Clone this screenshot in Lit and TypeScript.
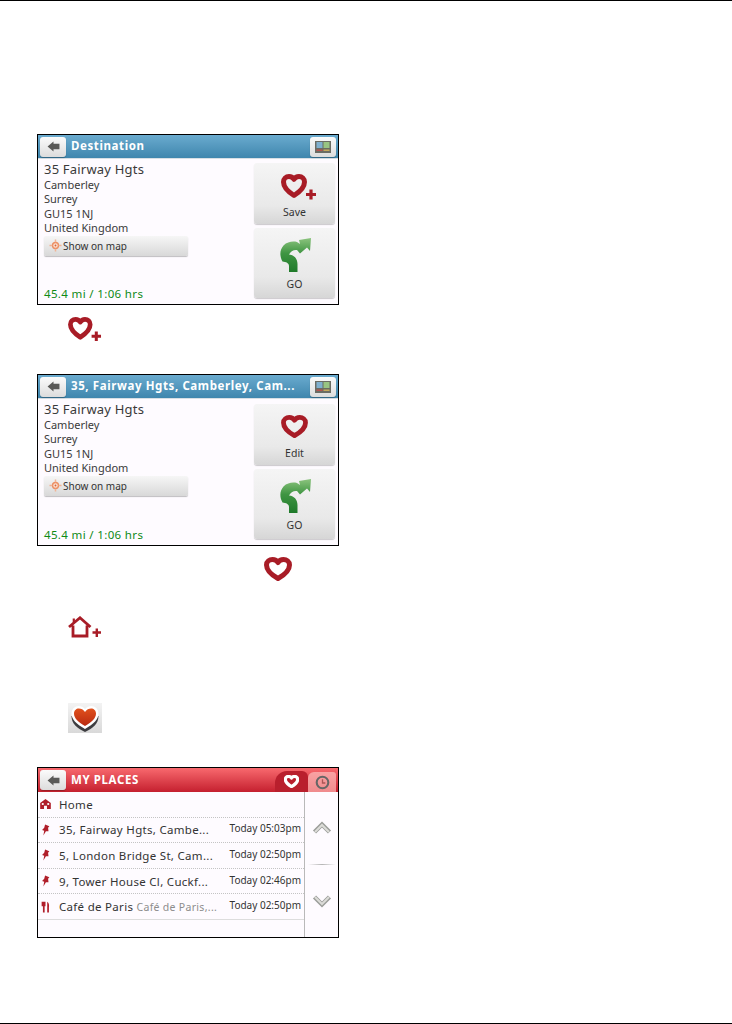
import { LitElement, html, css } from "lit";
import { customElement } from "lit/decorators.js";

const heartPath = "M14 21.5 C6 17 2.5 12.5 2.5 8 C2.5 4.5 5.5 2.5 8.5 2.5 C10.5 2.5 12.8 3.5 14 5.5 C15.2 3.5 17.5 2.5 19.5 2.5 C22.5 2.5 25.5 4.5 25.5 8 C25.5 12.5 22 17 14 21.5 Z";

const heart = (cls: string, sw = 5) => html`<svg class=${cls} viewBox="0 0 28 24"><path d=${heartPath} fill="none" stroke="#a81c26" stroke-width=${sw} stroke-linejoin="round"/></svg>`;

const heartPlus = (cls: string) => html`<svg class=${cls} viewBox="0 0 36 26">
  <path d="M13 21.5 C6 17 2.5 12.5 2.5 8 C2.5 4.7 5 2.5 8 2.5 C10 2.5 12 3.6 13 5.4 C14 3.6 16 2.5 18 2.5 C21 2.5 23.5 4.7 23.5 8 C23.5 12.5 20 17 13 21.5 Z" fill="none" stroke="#a81c26" stroke-width="5" stroke-linejoin="round"/>
  <path d="M25 20.5 H35 M30 15.5 V25.5" stroke="#a81c26" stroke-width="3.2" fill="none"/>
</svg>`;

const backArrow = html`<svg class="back-ico" viewBox="0 0 14 12"><path d="M0.5 6 L7 0.5 V3 H13.5 V9 H7 V11.5 Z" fill="#5a5a58"/></svg>`;

const mapIco = html`<svg class="map-ico" viewBox="0 0 16 12">
  <rect width="16" height="12" fill="#6a6c64"/>
  <rect x="1.5" y="1" width="6" height="6" fill="#7fb0cf"/>
  <rect x="8.5" y="1" width="6" height="6" fill="#98c483"/>
  <rect x="1.5" y="8.5" width="6" height="1.5" fill="#b9524c"/>
  <rect x="8.5" y="8.5" width="6" height="1.5" fill="#c7a95a"/>
</svg>`;

const target = html`<svg class="target" viewBox="0 0 14 14">
  <circle cx="7" cy="7" r="3.2" fill="#fbe2d4" stroke="#ec8e62" stroke-width="1.5"/>
  <circle cx="7" cy="7" r="1" fill="#d8643a"/>
  <path d="M7 0.5 V3.5 M7 10.5 V13.5 M0.5 7 H3.5 M10.5 7 H13.5" stroke="#f2b394" stroke-width="1.6"/>
</svg>`;

const goArrow = (id: string) => html`<svg class="go-ico" viewBox="0 0 32 35">
  <defs><linearGradient id=${id} x1="0" y1="0" x2="0" y2="1">
    <stop offset="0" stop-color="#8cc47e"/><stop offset="0.45" stop-color="#3f9542"/><stop offset="1" stop-color="#1f7a2a"/>
  </linearGradient></defs>
  <path d="M9 34 V28 C9 25 6 24 2.5 23.5 C-0.5 18 -0.5 12 3.5 7.5 C7.5 3.5 13 3 17 4 L20 6 L19 2 L31 0 L30 13 L27 9.5 L20 15.5 L17 12 C13.5 11.5 10.5 13.5 9 16.5 C14.5 17 17.5 21 17.5 26 V34 Z" fill="url(#${id})"/>
</svg>`;

const pin = html`<svg class="row-ico" viewBox="0 0 10 14"><path d="M4.5 0.5 L9.5 2.5 L8 4.5 L8.5 8.5 L5.5 8.5 L2.5 13.5 L3.5 8 L1 7 L3.5 4.5 Z" fill="#b01e2a"/></svg>`;
const house = html`<svg class="row-ico" viewBox="0 0 12 12"><path d="M6 0.5 L11.8 5 V11.5 H7.6 V8 H4.4 V11.5 H0.2 V5 Z" fill="#b01e2a"/><rect x="2" y="5" width="2" height="2" fill="#fff"/><rect x="8" y="5" width="2" height="2" fill="#fff"/></svg>`;
const fork = html`<svg class="row-ico" viewBox="0 0 10 14"><path d="M0.5 1 V6 H2 V13.5 H4 V6 H5 V1 Z M7 1 C9 2 9.5 5 9 7.5 V13.5 H7 Z" fill="#b01e2a"/></svg>`;

const chevUp = html`<svg class="chev" viewBox="0 0 20 14"><path d="M2.5 11 L10 3.5 L17.5 11" fill="none" stroke="#9c9e9a" stroke-width="4.4"/><path d="M3 11 L10 4 L17 11" fill="none" stroke="#dcdcd8" stroke-width="2"/></svg>`;
const chevDown = html`<svg class="chev" viewBox="0 0 20 14"><path d="M2.5 3 L10 10.5 L17.5 3" fill="none" stroke="#9c9e9a" stroke-width="4.4"/><path d="M3 3 L10 10 L17 3" fill="none" stroke="#dcdcd8" stroke-width="2"/></svg>`;

const homePlus = html`<svg class="ico-home" viewBox="0 0 34 22">
  <path d="M1 11 L12 1.8 L22.5 11 M5 9.5 V20 H19 V9.5" fill="none" stroke="#a81c26" stroke-width="2.8"/>
  <path d="M5.8 2.5 V6.5" stroke="#a81c26" stroke-width="2.2"/>
  <path d="M24.5 16.5 H33 M28.8 12.5 V21" stroke="#a81c26" stroke-width="2.4"/>
</svg>`;

const heartTile = html`<div class="tile"><svg viewBox="0 0 34 30" class="tile-ico">
  <defs><linearGradient id="th" x1="0" y1="0" x2="0" y2="1"><stop offset="0" stop-color="#e0501c"/><stop offset="1" stop-color="#b92a10"/></linearGradient></defs>
  <path d="M17 29 C9 25 3.5 21 3.5 13 H30.5 C30.5 21 25 25 17 29 Z" fill="#3d3d40"/>
  <path d="M17 26 C8 21 3.5 16 3.5 10.5 C3.5 6 7 3 10.5 3 C13 3 15.5 4 17 6 C18.5 4 21 3 23.5 3 C27 3 30.5 6 30.5 10.5 C30.5 16 26 21 17 26 Z" fill="#fff"/>
  <path d="M17 23 C10 19 6 15 6 10.5 C6 7.5 8.3 5.5 10.8 5.5 C13 5.5 15.6 6.6 17 9 C18.4 6.6 21 5.5 23.2 5.5 C25.7 5.5 28 7.5 28 10.5 C28 15 24 19 17 23 Z" fill="url(#th)"/>
</svg></div>`;

const heartWhite = html`<svg class="tab-heart" viewBox="0 0 28 24"><path d=${heartPath} fill="#b91f2d" stroke="#fff" stroke-width="6" stroke-linejoin="round"/></svg>`;
const clock = html`<svg class="clock" viewBox="0 0 16 16"><circle cx="8" cy="8" r="6.2" fill="none" stroke="#666" stroke-width="2.2"/><path d="M8 4.5 V8.5 H11" fill="none" stroke="#a55" stroke-width="1.4"/></svg>`;

@customElement("app-root")
export class AppRoot extends LitElement {
  static styles = css`
    :host { display: block; width: 732px; height: 1024px; background: #fff; font-family: "Noto Sans", sans-serif; color: #333; }
    .page { display: flex; flex-direction: column; height: 1024px; }
    .rule { height: 1px; background: #000; flex: none; }
    .content { flex: 1; padding: 133px 0 0 37px; display: flex; flex-direction: column; align-items: flex-start; }
    .frame { width: 302px; box-sizing: border-box; border: 1px solid #000; background: #fefbff; display: flex; flex-direction: column; overflow: hidden; flex: none; }
    .dest { height: 171px; }
    .dest.tall { height: 172px; }
    .head { height: 24px; flex: none; display: flex; align-items: center; padding: 0 2px; gap: 5px; background: linear-gradient(#6aabcf, #3f86ad); border-bottom: 1px solid #d8dfe4; box-sizing: border-box; }
    .head.red { background: linear-gradient(#f8696e, #c5202f); border-bottom: 0; padding-right: 0; }
    .hbtn { width: 26px; height: 20px; border-radius: 3px; background: linear-gradient(#fbfbfb, #dcdcdc); display: flex; align-items: center; justify-content: center; flex: none; box-shadow: 0 1px 1px rgba(0,0,0,.25); }
    .back-ico { width: 13px; height: 11px; }
    .map-ico { width: 16px; height: 12px; }
    .title { flex: 1; color: #fff; font-size: 11.5px; font-weight: 700; white-space: nowrap; letter-spacing: .6px; min-width: 0; padding-bottom: 2px; }
    .body { flex: 1; display: grid; grid-template-columns: 1fr 81px; padding: 0 3px 0 6px; column-gap: 10px; min-height: 0; }
    .info { display: flex; flex-direction: column; min-width: 0; padding: 2px 0 3px; }
    .name { font-size: 13px; line-height: 17px; color: #3a3a3a; letter-spacing: .2px; }
    .line { font-size: 11px; line-height: 14.4px; color: #3a3a3a; }
    .map-btn { width: 144px; height: 20px; box-sizing: border-box; border-radius: 2px; background: linear-gradient(#f6f6f6, #d8d8d8); box-shadow: 0 1px 1px rgba(0,0,0,.25); display: flex; align-items: center; padding-left: 5px; gap: 1px; font-size: 10px; color: #333; }
    .target { width: 13px; height: 13px; flex: none; }
    .dist { margin-top: auto; font-size: 11.5px; line-height: 14px; color: #0f8a16; letter-spacing: .35px; white-space: pre; }
    .side { display: flex; flex-direction: column; justify-content: flex-end; gap: 4px; padding-bottom: 6px; }
    .big { height: 61px; flex: none; border-radius: 3px; background: linear-gradient(#f5f5f5, #e9e9e9 70%, #d6d6d6); box-shadow: 0 1px 1px rgba(0,0,0,.2); display: flex; flex-direction: column; align-items: center; justify-content: flex-end; font-size: 10.5px; color: #333; padding-bottom: 6px; box-sizing: border-box; }
    .big.go { height: 70px; padding-bottom: 8px; }
    .big .lbl { line-height: 12px; }
    .save-ico { width: 36px; height: 26px; margin: 0 0 6px 9px; }
    .edit-ico { width: 27px; height: 23px; margin-bottom: 9px; }
    .go-ico { width: 32px; height: 35px; margin: 0 0 5px 2px; overflow: visible; }
    .ic-row { height: 69px; padding-left: 31px; box-sizing: border-box; display: flex; align-items: flex-start; flex: none; }
    .sm-plus { width: 34px; height: 24.5px; margin-top: 12px; }
    .gap-row { height: 116px; position: relative; width: 302px; flex: none; }
    .sm-heart { position: absolute; left: 226.5px; top: 11px; width: 28px; height: 24px; }
    .ico-home { position: absolute; left: 31px; top: 70px; width: 34px; height: 22px; }
    .tile-row { height: 105px; padding: 41px 0 0 31px; flex: none; box-sizing: border-box; }
    .tile { width: 34px; height: 30px; background: linear-gradient(#f3f3f3, #d9d9d9); display: flex; }
    .tile-ico { width: 34px; height: 30px; }
    .places { height: 171px; }
    .tabs { margin-left: auto; display: flex; align-items: flex-end; height: 100%; }
    .tab { height: 20px; display: flex; align-items: center; justify-content: center; }
    .tab.on { width: 33px; height: 21px; background: #b91f2d; border-radius: 12px 6px 0 0; }
    .tab.off { width: 28px; margin-right: 2px; background: linear-gradient(#f9a2a3, #f08b8d); border-radius: 6px 3px 0 0; }
    .tab-heart { width: 15px; height: 13px; }
    .clock { width: 15px; height: 15px; }
    .list-wrap { flex: 1; display: grid; grid-template-columns: 1fr 33px; min-height: 0; background: #fefbff; }
    .list { border-right: 1px solid #b9b9b9; display: flex; flex-direction: column; min-width: 0; }
    .row { height: 25.6px; flex: none; display: flex; align-items: center; border-bottom: 1px dotted #c4c4c4; box-sizing: border-box; padding: 0 3px 0 2px; font-size: 11.5px; color: #333; }
    .row.last { border-bottom: 1px solid #ddd; }
    .row-ico { width: 11px; height: 12px; flex: none; margin-right: 8px; }
    .rname { flex: 1; white-space: nowrap; min-width: 0; letter-spacing: .3px; }
    .rsub { color: #8d8d8d; font-size: 10.5px; letter-spacing: .3px; }
    .rtime { font-size: 10px; flex: none; color: #333; margin-bottom: 3px; }
    .scroll { display: flex; flex-direction: column; align-items: center; justify-content: space-between; padding: 29px 0 29px; }
    .chev { width: 20px; height: 14px; }
    .shine { height: 1px; width: 28px; background: linear-gradient(90deg, transparent, #b5b5b5, transparent); }
  `;

  dest(title: string, edit: boolean, id: string) {
    return html`<div class="frame dest ${edit ? "tall" : ""}">
      <div class="head">
        <div class="hbtn">${backArrow}</div>
        <div class="title">${title}</div>
        <div class="hbtn">${mapIco}</div>
      </div>
      <div class="body">
        <div class="info">
          <div class="name">35 Fairway Hgts</div>
          <div class="line">Camberley</div>
          <div class="line">Surrey</div>
          <div class="line">GU15 1NJ</div>
          <div class="line">United Kingdom</div>
          <div class="map-btn">${target}<span>Show on map</span></div>
          <div class="dist">45.4 mi / 1:06 hrs</div>
        </div>
        <div class="side">
          <div class="big">${edit ? heart("edit-ico") : heartPlus("save-ico")}<span class="lbl">${edit ? "Edit" : "Save"}</span></div>
          <div class="big go">${goArrow(id)}<span class="lbl">GO</span></div>
        </div>
      </div>
    </div>`;
  }

  row(ico: unknown, name: unknown, time: string, last = false) {
    return html`<div class="row ${last ? "last" : ""}">${ico}<div class="rname">${name}</div>${time ? html`<div class="rtime">${time}</div>` : ""}</div>`;
  }

  render() {
    return html`<div class="page">
      <div class="rule"></div>
      <div class="content">
        ${this.dest("Destination", false, "g1")}
        <div class="ic-row">${heartPlus("sm-plus")}</div>
        ${this.dest("35, Fairway Hgts, Camberley, Cam...", true, "g2")}
        <div class="gap-row">${heart("sm-heart")}${homePlus}</div>
        <div class="tile-row">${heartTile}</div>
        <div class="frame places">
          <div class="head red">
            <div class="hbtn">${backArrow}</div>
            <div class="title">MY PLACES</div>
            <div class="tabs">
              <div class="tab on">${heartWhite}</div>
              <div class="tab off">${clock}</div>
            </div>
          </div>
          <div class="list-wrap">
            <div class="list">
              ${this.row(house, "Home", "")}
              ${this.row(pin, "35, Fairway Hgts, Cambe...", "Today 05:03pm")}
              ${this.row(pin, "5, London Bridge St, Cam...", "Today 02:50pm")}
              ${this.row(pin, "9, Tower House Cl, Cuckf...", "Today 02:46pm")}
              ${this.row(fork, html`Café de Paris <span class="rsub">Café de Paris,...</span>`, "Today 02:50pm", true)}
            </div>
            <div class="scroll">${chevUp}<div class="shine"></div>${chevDown}</div>
          </div>
        </div>
      </div>
      <div class="rule"></div>
    </div>`;
  }
}
